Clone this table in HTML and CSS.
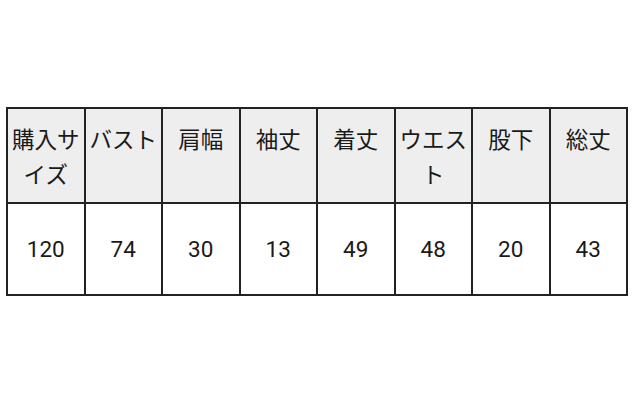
FILE: index.html
```
<!DOCTYPE html>
<html lang="ja">
<head>
<meta charset="utf-8">
<link rel="stylesheet" href="styles.css">
</head>
<body>
<div class="wrap">
<table class="size">
<thead>
<tr><th>購入サイズ</th><th>バスト</th><th>肩幅</th><th>袖丈</th><th>着丈</th><th>ウエスト</th><th>股下</th><th>総丈</th></tr>
</thead>
<tbody>
<tr><td>120</td><td>74</td><td>30</td><td>13</td><td>49</td><td>48</td><td>20</td><td>43</td></tr>
</tbody>
</table>
</div>
</body>
</html>
```
FILE: styles.css
```
html, body { margin: 0; padding: 0; background: #fff; }
.wrap { padding: 107px 0 0 6px; }
.size {
  border-collapse: collapse;
  table-layout: fixed;
  width: 622px;
  font-family: "Roboto", "Noto Sans CJK JP", sans-serif;
  color: #1a1a1a;
}
.size th, .size td {
  border: 2px solid #222;
  text-align: center;
  padding: 0 3px;
  font-size: 22.5px;
}
.size th {
  background: #eeeeee;
  font-weight: normal;
  vertical-align: top;
  line-height: 35px;
  padding-top: 12px;
  padding-bottom: 11px;
  font-family: "Noto Sans CJK JP", sans-serif;
}
.size td {
  height: 90px;
  vertical-align: middle;
  line-height: 30px;
}
```
